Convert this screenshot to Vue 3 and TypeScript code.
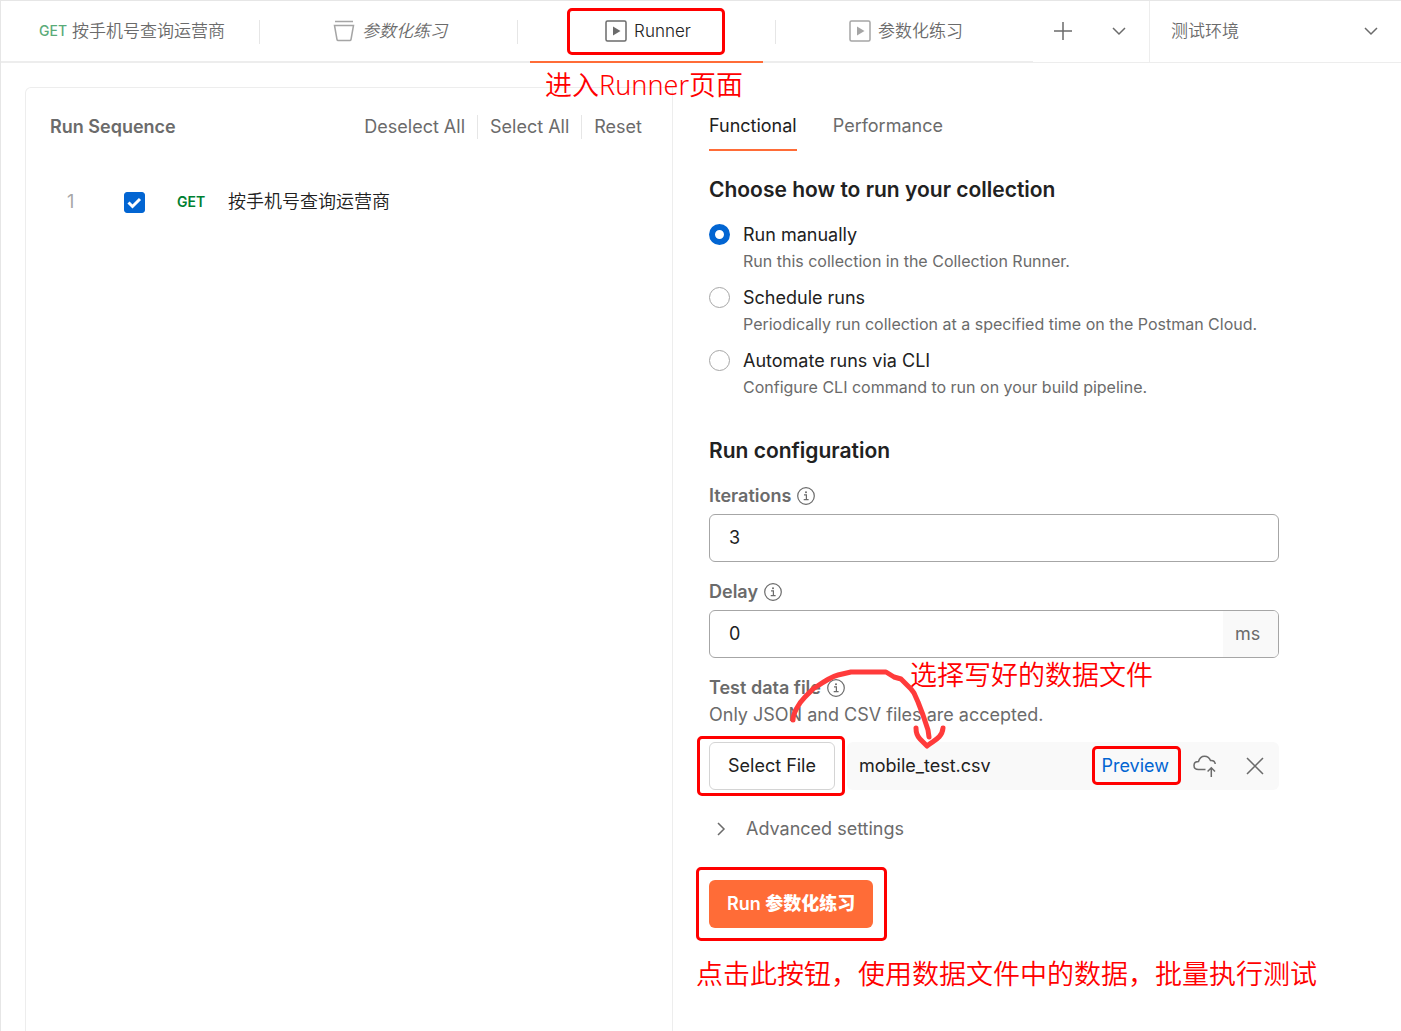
<script setup lang="ts">
import { ref } from 'vue'

interface Tab {
  id: number
  label: string
  kind: 'request' | 'collection' | 'runner'
  italic?: boolean
  note?: string
}

interface RunMode {
  value: string
  label: string
  description: string
}

const tabs: Tab[] = [
  { id: 1, label: '按手机号查询运营商', kind: 'request' },
  { id: 2, label: '参数化练习', kind: 'collection', italic: true },
  { id: 3, label: 'Runner', kind: 'runner', note: '进入Runner页面' },
  { id: 4, label: '参数化练习', kind: 'runner' },
]
const activeTab = ref(3)

const runModes: RunMode[] = [
  {
    value: 'manual',
    label: 'Run manually',
    description: 'Run this collection in the Collection Runner.',
  },
  {
    value: 'schedule',
    label: 'Schedule runs',
    description: 'Periodically run collection at a specified time on the Postman Cloud.',
  },
  {
    value: 'cli',
    label: 'Automate runs via CLI',
    description: 'Configure CLI command to run on your build pipeline.',
  },
]
const runMode = ref('manual')
const included = ref(true)
const iterations = ref('3')
const delay = ref('0')
const environment = ref('测试环境')
</script>

<template>
  <div class="app">
    <header class="topbar">
      <nav class="tabs" aria-label="Open tabs">
        <div
          v-for="tab in tabs"
          :key="tab.id"
          class="tab"
          :class="{ active: tab.id === activeTab }"
        >
          <button type="button" class="tab-button" @click="activeTab = tab.id">
            <span v-if="tab.kind === 'request'" class="verb">GET</span>
            <svg v-else-if="tab.kind === 'collection'" class="tab-icon" viewBox="0 0 22 22">
              <path d="M2 1.5H20M1.5 5.5H20.5L18 19.5Q17.800 20.500 16.800 20.500H5.200Q4.200 20.500 4 19.500Z" />
            </svg>
            <svg v-else class="tab-icon" viewBox="0 0 22 22">
              <rect x="1" y="1" width="20" height="20" rx="1.500" />
              <path class="solid" d="M8 6.500L15.500 11L8 15.500Z" />
            </svg>
            <span :class="{ italic: tab.italic }">{{ tab.label }}</span>
            <span v-if="tab.note" class="mark mark-tab"></span>
          </button>
          <span v-if="tab.note" class="note note-tab">{{ tab.note }}</span>
        </div>
      </nav>
      <div class="tab-actions">
        <button type="button" class="icon-button" aria-label="New tab">
          <svg width="20" height="20" viewBox="0 0 20 20"><path d="M10 1V19M1 10H19" /></svg>
        </button>
        <button type="button" class="icon-button" aria-label="Tab options">
          <svg width="20" height="20" viewBox="0 0 20 20"><path d="M4 7L10 13L16 7" /></svg>
        </button>
      </div>
      <div class="environment">
        <select v-model="environment" aria-label="Environment">
          <option>测试环境</option>
        </select>
        <svg width="20" height="20" viewBox="0 0 20 20"><path d="M4 7L10 13L16 7" /></svg>
      </div>
    </header>

    <main class="workspace">
      <section class="sequence">
        <div class="sequence-head">
          <h2>Run Sequence</h2>
          <div class="sequence-actions">
            <button type="button">Deselect All</button>
            <button type="button">Select All</button>
            <button type="button">Reset</button>
          </div>
        </div>
        <ol class="requests">
          <li>
            <span class="index">1</span>
            <label class="request">
              <span class="check">
                <input v-model="included" type="checkbox" />
                <svg v-if="included" viewBox="0 0 21 21"><path d="M4.500 10.500L8.500 14.500L16 7" /></svg>
              </span>
              <span class="verb strong">GET</span>
              <span class="request-name">按手机号查询运营商</span>
            </label>
          </li>
        </ol>
      </section>

      <section class="settings">
        <nav class="modes" aria-label="Run type">
          <button type="button" class="selected">Functional</button>
          <button type="button">Performance</button>
        </nav>

        <h3>Choose how to run your collection</h3>
        <div class="options">
          <div v-for="mode in runModes" :key="mode.value" class="option">
            <input :id="mode.value" v-model="runMode" type="radio" name="mode" :value="mode.value" />
            <label :for="mode.value">{{ mode.label }}</label>
            <p>{{ mode.description }}</p>
          </div>
        </div>

        <h3>Run configuration</h3>
        <div class="field">
          <div class="field-label">
            <label for="iterations">Iterations</label>
            <svg class="info" viewBox="0 0 18 18">
              <circle cx="9" cy="9" r="8.300" />
              <path d="M7 7.800H9.400V12.700M6.700 12.700H11.600" />
              <circle class="dot" cx="9" cy="5.300" r="1" />
            </svg>
          </div>
          <div class="control"><input id="iterations" v-model="iterations" type="text" /></div>
        </div>
        <div class="field">
          <div class="field-label">
            <label for="delay">Delay</label>
            <svg class="info" viewBox="0 0 18 18">
              <circle cx="9" cy="9" r="8.300" />
              <path d="M7 7.800H9.400V12.700M6.700 12.700H11.600" />
              <circle class="dot" cx="9" cy="5.300" r="1" />
            </svg>
          </div>
          <div class="control">
            <input id="delay" v-model="delay" type="text" />
            <span class="unit">ms</span>
          </div>
        </div>
        <div class="field data-file">
          <div class="field-label">
            <span>Test data file</span>
            <svg class="info" viewBox="0 0 18 18">
              <circle cx="9" cy="9" r="8.300" />
              <path d="M7 7.800H9.400V12.700M6.700 12.700H11.600" />
              <circle class="dot" cx="9" cy="5.300" r="1" />
            </svg>
          </div>
          <p class="hint">Only JSON and CSV files are accepted.</p>
          <div class="file-row">
            <button type="button" class="select-file">
              Select File
              <span class="mark mark-file"></span>
            </button>
            <div class="file">
              <span class="file-name">mobile_test.csv</span>
              <a href="#" class="preview">Preview<span class="mark mark-preview"></span></a>
              <button type="button" class="icon-button" aria-label="Upload to cloud">
                <svg width="24" height="24" viewBox="0 0 24 24">
                  <path d="M12.500 15.500H5.500C3 15.500 1 14 1 11.500C1 9 2.500 7.500 5.500 7.500C6.500 4 8.500 2.200 11.500 2.200C14.500 2.200 16.500 3.800 17.500 6.500C20 6.300 22 7.500 22.200 10" />
                  <path d="M18.300 23V14M14.600 17.500L18.300 13.800L22 17.500" />
                </svg>
              </button>
              <button type="button" class="icon-button" aria-label="Remove file">
                <svg width="20" height="20" viewBox="0 0 20 20"><path d="M2 2L18 18M18 2L2 18" /></svg>
              </button>
            </div>
          </div>
          <svg class="arrow" width="160" height="84" viewBox="0 0 160 84">
            <path d="M7 54C7 48 12 38 19 31L27 23C33 19 44 11 52 9L65 6H100L108 11L115 13L125 23L128 27L132 36L137 49L142 64L143 71" />
            <path d="M130 62C130 67 131 70 134 73L141 80C146 75 156 73 157 62" />
          </svg>
          <span class="note note-file">选择写好的数据文件</span>
        </div>

        <button type="button" class="advanced">
          <svg width="20" height="20" viewBox="0 0 20 20"><path d="M7 4L13 10L7 16" /></svg>
          Advanced settings
        </button>

        <button type="button" class="run">
          Run <b>参数化练习</b>
          <span class="mark mark-run"></span>
        </button>
        <p class="note note-run">点击此按钮，使用数据文件中的数据，批量执行测试</p>
      </section>
    </main>
  </div>
</template>

<style>
body {
  margin: 0;
  background: #fff;
}
</style>

<style scoped>
.app {
  box-sizing: border-box;
  min-height: 100vh;
  display: flex;
  flex-direction: column;
  border-left: 1px solid #e6e6e6;
  color: #212121;
  font: 400 18px/24px Inter, 'Noto Sans CJK SC', sans-serif;
}

.app *,
.app *::before {
  box-sizing: border-box;
}

button,
input,
select {
  margin: 0;
  padding: 0;
  border: 0;
  background: none;
  color: inherit;
  font: inherit;
  outline: none;
}

h2,
h3,
p,
ol {
  margin: 0;
  padding: 0;
  list-style: none;
}

svg {
  display: block;
  flex: none;
  fill: none;
  stroke: #6b6b6b;
  stroke-width: 1.5px;
}

/* Top bar */
.topbar {
  display: flex;
  height: 63px;
  border-top: 1px solid #e6e6e6;
  border-bottom: 1px solid #ededed;
  color: #6b6b6b;
  font-size: 17px;
  font-weight: 350;
}

.tabs {
  flex: 1;
  display: flex;
  min-width: 0;
  border-bottom: 1px solid #ededed;
}

.tab {
  position: relative;
  flex: 1;
  display: flex;
  align-items: center;
  justify-content: center;
  padding-left: 4px;
}

.tab::before {
  content: '';
  position: absolute;
  right: -1px;
  top: 19px;
  width: 1px;
  height: 24px;
  background: #e6e6e6;
}

.tab:last-child::before {
  display: none;
}

.tab.active::after {
  content: '';
  position: absolute;
  left: 13px;
  right: 12px;
  bottom: -2px;
  height: 2px;
  background: #ff6c37;
}

.tab-button {
  position: relative;
  display: flex;
  align-items: center;
  gap: 7px;
  white-space: nowrap;
}

.tab-icon {
  width: 22px;
  height: 22px;
  opacity: 0.6;
}

.active .tab-icon {
  opacity: 1;
}

.active .tab-button {
  color: #212121;
}

.solid {
  fill: #6b6b6b;
  stroke: none;
}

.italic {
  font-style: italic;
}

.verb {
  color: #007f31;
  font-size: 14px;
  font-weight: 600;
}

.tab .verb {
  font-weight: 500;
  opacity: 0.65;
  margin-right: -2px;
}

.tab-actions {
  width: 116px;
  display: flex;
  align-items: center;
  justify-content: space-between;
  padding: 0 20px 1px;
}

.environment {
  position: relative;
  width: 252px;
  display: flex;
  align-items: center;
  padding-bottom: 2px;
  border-left: 1px solid #ededed;
}

.environment select {
  appearance: none;
  width: 100%;
  height: 100%;
  padding: 0 48px 0 21px;
}

.environment svg {
  position: absolute;
  right: 20px;
  pointer-events: none;
}

/* Workspace */
.workspace {
  flex: 1;
  display: grid;
  grid-template-columns: minmax(0, 648fr) minmax(0, 728fr);
  padding: 24px 0 0 24px;
}

.sequence {
  border: 1px solid #ededed;
  border-bottom: 0;
  border-radius: 6px 0 0 0;
  padding: 27px 18px 0 24px;
}

.sequence-head {
  display: flex;
  justify-content: space-between;
  color: #6b6b6b;
}

h2 {
  font-size: 18px;
  font-weight: 600;
}

.sequence-actions {
  display: flex;
}

.sequence-actions button {
  padding: 0 12px;
  border-left: 1px solid #e6e6e6;
}

.sequence-actions button:first-child {
  border-left: 0;
}

.requests {
  margin-top: 51px;
}

.requests li {
  display: flex;
  align-items: center;
}

.index {
  width: 74px;
  padding-left: 17px;
  color: #a6a6a6;
}

.request {
  display: flex;
  align-items: center;
}

.request-name {
  font-weight: 350;
}

.check {
  position: relative;
  width: 21px;
  height: 21px;
  margin-right: 32px;
}

.check input {
  appearance: none;
  display: block;
  width: 21px;
  height: 21px;
  border: 1px solid #a6a6a6;
  border-radius: 3px;
}

.check input:checked {
  border-color: #0265d2;
  background: #0265d2;
}

.check svg {
  position: absolute;
  inset: 0;
  stroke: #fff;
  stroke-width: 3px;
  pointer-events: none;
}

.verb.strong {
  width: 51px;
}

/* Run settings */
.settings {
  max-width: 606px;
  padding: 27px 0 0 36px;
}

.modes {
  display: flex;
  gap: 36px;
  color: #6b6b6b;
}

.modes button {
  height: 37px;
  padding-bottom: 11px;
  border-bottom: 2px solid transparent;
}

.modes .selected {
  border-color: #ff6c37;
  color: #212121;
}

h3 {
  font-size: 21px;
  line-height: 30px;
  font-weight: 600;
}

.modes + h3 {
  margin-top: 24px;
}

.options {
  margin: 18px 0 36px;
}

.option {
  display: grid;
  grid-template-columns: 21px 1fr;
  grid-template-rows: 23px 30px;
  column-gap: 13px;
  align-items: center;
  height: 51px;
  margin-bottom: 12px;
}

.option input {
  appearance: none;
  width: 21px;
  height: 21px;
  border: 1px solid #a6a6a6;
  border-radius: 50%;
}

.option input:checked {
  border: 6px solid #0265d2;
}

.option p {
  grid-column: 2;
  color: #6b6b6b;
  font-size: 16px;
  line-height: 30px;
  white-space: nowrap;
}

.field {
  margin-top: 18px;
}

.field-label {
  display: flex;
  align-items: center;
  gap: 6px;
  color: #6b6b6b;
  font-weight: 600;
}

.info {
  width: 18px;
  height: 18px;
  stroke-width: 1.2px;
}

.info .dot {
  fill: #6b6b6b;
  stroke: none;
}

.control {
  display: flex;
  height: 48px;
  margin-top: 6px;
  overflow: hidden;
  border: 1px solid #a6a6a6;
  border-radius: 6px;
}

.control input {
  flex: 1;
  min-width: 0;
  padding: 0 19px;
}

.unit {
  width: 55px;
  background: #f9f9f9;
  color: #6b6b6b;
  line-height: 46px;
  padding-left: 12px;
}

.data-file {
  position: relative;
}

.hint {
  margin-top: 3px;
  color: #6b6b6b;
}

.file-row {
  display: flex;
  gap: 12px;
  margin-top: 15px;
}

.select-file {
  position: relative;
  width: 126px;
  height: 48px;
  border: 1px solid #d4d4d4;
  border-radius: 6px;
  white-space: nowrap;
}

.file {
  flex: 1;
  display: flex;
  align-items: center;
  padding: 0 14px 0 12px;
  border-radius: 6px;
  background: #f9f9f9;
}

.file-name {
  flex: 1;
}

.preview {
  position: relative;
  margin-right: 24px;
  color: #0265d2;
  text-decoration: none;
}

.file .icon-button + .icon-button {
  margin-left: 28px;
}

.advanced {
  display: flex;
  align-items: center;
  gap: 15px;
  margin: 27px 0 0 2px;
  color: #6b6b6b;
}

.run {
  position: relative;
  height: 48px;
  margin-top: 39px;
  padding: 0 18px;
  border-radius: 6px;
  background: #ff6c37;
  color: #fff;
  font-weight: 600;
}

.run b {
  font-weight: 800;
}

/* Red tutorial markup laid over the interface */
.mark {
  position: absolute;
  border: 3px solid #f00;
  border-radius: 5px;
  pointer-events: none;
}

.mark-tab {
  inset: -11px -34px -12px -38px;
}

.mark-file {
  inset: -7px -11px -7px -13px;
}

.mark-preview {
  inset: -8px -12px -7px -10px;
}

.mark-run {
  inset: -13px -14px -13px -13px;
}

.note {
  color: #f00;
  font: 350 27px/36px 'Noto Sans', 'Noto Sans CJK SC', sans-serif;
  white-space: nowrap;
}

.note-tab {
  position: absolute;
  left: 28px;
  top: 66px;
}

.arrow {
  position: absolute;
  left: 77px;
  top: -10px;
  stroke: #ff3b3b;
  stroke-width: 5px;
  stroke-linecap: round;
  stroke-linejoin: round;
  pointer-events: none;
}

.note-file {
  position: absolute;
  left: 201px;
  top: -19px;
}

.note-run {
  margin: 28px 0 0 -13px;
}
</style>
